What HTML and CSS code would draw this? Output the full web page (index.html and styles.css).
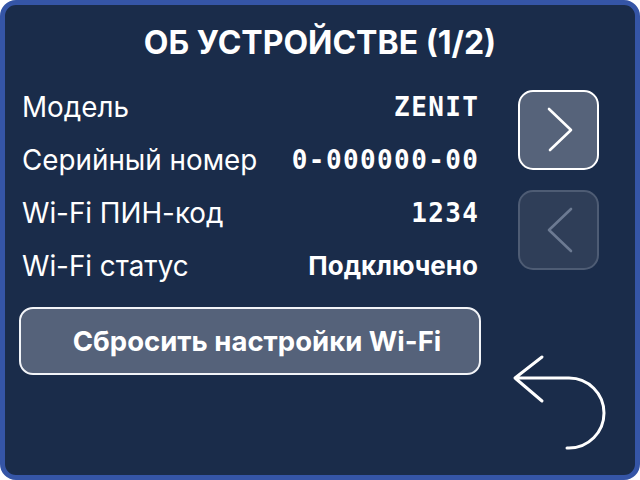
FILE: index.html
```html
<!DOCTYPE html>
<html lang="ru">
<head>
    <meta charset="UTF-8">
    <title>Об устройстве</title>
    <link rel="stylesheet" href="styles.css">
</head>
<body>
    <div class="screen">
        <h1 class="title">ОБ УСТРОЙСТВЕ (1/2)</h1>

        <div class="content">
            <div class="info">
                <div class="row">
                    <span class="label">Модель</span>
                    <span class="value mono">ZENIT</span>
                </div>
                <div class="row">
                    <span class="label">Серийный номер</span>
                    <span class="value mono">0-000000-00</span>
                </div>
                <div class="row">
                    <span class="label">Wi-Fi ПИН-код</span>
                    <span class="value mono">1234</span>
                </div>
                <div class="row">
                    <span class="label">Wi-Fi статус</span>
                    <span class="value">Подключено</span>
                </div>

                <button class="reset">Сбросить настройки Wi-Fi</button>
            </div>

            <div class="side">
                <button class="nav">
                    <svg width="80" height="80" viewBox="0 0 80 80">
                        <polyline points="30,19 52,40 31,60" fill="none" stroke="#fff" stroke-width="2.6" stroke-linecap="round" stroke-linejoin="round"/>
                    </svg>
                </button>
                <button class="nav disabled">
                    <svg width="80" height="80" viewBox="0 0 80 80">
                        <polyline points="52,19 30,40 52,61" fill="none" stroke="#6c7a92" stroke-width="2.6" stroke-linecap="round" stroke-linejoin="round"/>
                    </svg>
                </button>

                <!-- back -->
                <svg class="back" width="100" height="105" viewBox="0 0 100 105">
                    <path d="M33 7 L6 28 L33 51 M6 28 L60 28 A35 35 0 0 1 60 98 L58 98" fill="none" stroke="#fff" stroke-width="3" stroke-linecap="round" stroke-linejoin="round"/>
                </svg>
            </div>
        </div>
    </div>
</body>
</html>
```

FILE: styles.css
```css
body {
    margin: 0;
    background: #fff;
    font-family: 'Inter', 'Noto Sans', sans-serif;
    color: #fff;
}
.screen {
    box-sizing: border-box;
    width: 640px;
    height: 480px;
    border: 5px solid #3555a6;
    border-radius: 16px;
    background: #1a2c4a;
    overflow: hidden;
}
.title {
    margin: 0;
    height: 75px;
    line-height: 76px;
    font-size: 32px;
    font-weight: 700;
    text-align: center;
}
.content {
    display: flex;
}
.info {
    width: 459px;
    padding-left: 14px;
}
.row {
    display: flex;
    justify-content: space-between;
    align-items: center;
    height: 53px;
    padding-left: 3px;
}
.label {
    font-size: 27.8px;
}
.value {
    font-size: 26px;
    font-weight: 700;
}
.value.mono {
    font-family: 'DejaVu Sans Mono', monospace;
    font-size: 26px;
    letter-spacing: 1.4px;
    margin-right: -1.4px;
}
.reset {
    box-sizing: border-box;
    width: 462px;
    height: 68px;
    margin-top: 15px;
    padding: 0 0 0 14px;
    border: 2px solid #f2f4f8;
    border-radius: 14px;
    background: #55627a;
    color: #fff;
    font-family: 'Inter', 'Noto Sans', sans-serif;
    font-size: 27.5px;
    font-weight: 700;
}
.side {
    display: flex;
    flex-direction: column;
    align-items: flex-start;
    padding-left: 40px;
    padding-top: 10px;
    gap: 20px;
}
.nav {
    box-sizing: border-box;
    width: 81px;
    height: 80px;
    padding: 0;
    border: 2px solid #fff;
    border-radius: 15px;
    background: #56637a;
    display: flex;
    align-items: center;
    justify-content: center;
}
.nav svg {
    margin: -2px;
}
.nav.disabled {
    border-color: #4e5c74;
    background: #2f3e58;
}
.back {
    margin-top: 60px;
    margin-left: -9px;
}
```
